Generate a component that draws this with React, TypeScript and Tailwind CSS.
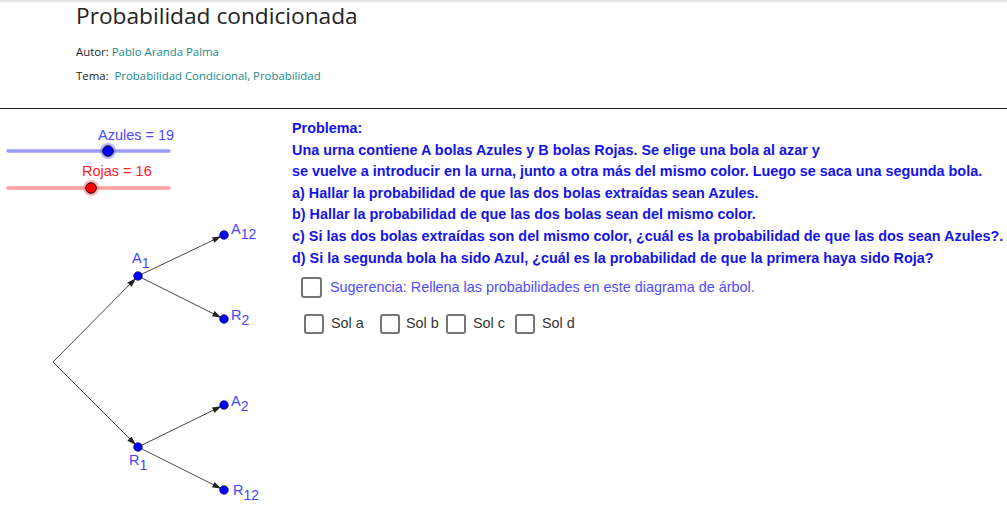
import React from "react";

const BLUE_LABEL = "#4646ff";

function Pt({ x, y }: { x: number; y: number }) {
  return <circle cx={x} cy={y} r={4.3} fill="#0000ff" stroke="#1a1a66" strokeWidth={0.8} />;
}

function Vec({ x1, y1, x2, y2 }: { x1: number; y1: number; x2: number; y2: number }) {
  const dx = x2 - x1;
  const dy = y2 - y1;
  const len = Math.sqrt(dx * dx + dy * dy);
  const ux = dx / len;
  const uy = dy / len;
  const tipX = x2 - ux * 3;
  const tipY = y2 - uy * 3;
  const bx = tipX - ux * 9;
  const by = tipY - uy * 9;
  const px = -uy * 3;
  const py = ux * 3;
  return (
    <g>
      <line x1={x1} y1={y1} x2={tipX} y2={tipY} stroke="#444" strokeWidth={1} />
      <polygon points={`${tipX},${tipY} ${bx + px},${by + py} ${bx - px},${by - py}`} fill="#222" />
    </g>
  );
}

function Label({ x, y, main, sub }: { x: number; y: number; main: string; sub: string }) {
  return (
    <text x={x} y={y} fill={BLUE_LABEL} fontFamily="'Liberation Sans', Arial, sans-serif" fontSize={14.5}>
      {main}
      <tspan fontSize={14} dy={5}>{sub}</tspan>
    </text>
  );
}

function Applet() {
  const o = 109;
  const root = { x: 53, y: 362 - o };
  const a1 = { x: 138, y: 276 - o };
  const r1 = { x: 138, y: 447 - o };
  const a12 = { x: 224, y: 235 - o };
  const r2 = { x: 224, y: 319 - o };
  const a2 = { x: 224, y: 405 - o };
  const r12 = { x: 224, y: 490 - o };
  return (
    <svg width={292} height={396} className="shrink-0 block">
      <text x={98} y={140 - o} fill="#4a4aff" fontFamily="'Liberation Sans', Arial, sans-serif" fontSize={14.5}>
        Azules = 19
      </text>
      <line x1={8} y1={151 - o} x2={169} y2={151 - o} stroke="#9c9cff" strokeWidth={3.5} strokeLinecap="round" />
      <circle cx={108} cy={151 - o} r={8} fill="#7a7aff" opacity={0.55} />
      <circle cx={108} cy={151 - o} r={5.3} fill="#0000ff" stroke="#111" strokeWidth={1} />

      <text x={82} y={176 - o} fill="#ff2020" fontFamily="'Liberation Sans', Arial, sans-serif" fontSize={14.5}>
        Rojas = 16
      </text>
      <line x1={8} y1={188 - o} x2={169} y2={188 - o} stroke="#ff9e9e" strokeWidth={3.5} strokeLinecap="round" />
      <circle cx={91} cy={188 - o} r={8} fill="#ff7a7a" opacity={0.55} />
      <circle cx={91} cy={188 - o} r={5.3} fill="#ff0000" stroke="#111" strokeWidth={1} />

      <Vec x1={root.x} y1={root.y} x2={a1.x} y2={a1.y} />
      <Vec x1={root.x} y1={root.y} x2={r1.x} y2={r1.y} />
      <Vec x1={a1.x} y1={a1.y} x2={a12.x} y2={a12.y} />
      <Vec x1={a1.x} y1={a1.y} x2={r2.x} y2={r2.y} />
      <Vec x1={r1.x} y1={r1.y} x2={a2.x} y2={a2.y} />
      <Vec x1={r1.x} y1={r1.y} x2={r12.x} y2={r12.y} />
      <Pt {...a1} />
      <Pt {...r1} />
      <Pt {...a12} />
      <Pt {...r2} />
      <Pt {...a2} />
      <Pt {...r12} />
      <Label x={132} y={263 - o} main="A" sub="1" />
      <Label x={231} y={234 - o} main="A" sub="12" />
      <Label x={231} y={320 - o} main="R" sub="2" />
      <Label x={231} y={406 - o} main="A" sub="2" />
      <Label x={129} y={465 - o} main="R" sub="1" />
      <Label x={233} y={495 - o} main="R" sub="12" />
    </svg>
  );
}

function Box({ size = 20 }: { size?: number }) {
  return (
    <span
      className="inline-block shrink-0 rounded-[3px] border-2 border-[#757575] bg-white"
      style={{ width: size, height: size }}
    />
  );
}

export default function App() {
  return (
    <div className="w-[1007px] h-[505px] overflow-hidden bg-white relative">
      <div className="h-[2px] bg-[#e6e6e6]" />
      <header className="pl-[76px] h-[107px] border-b border-[#222]">
        <h1
          className="text-[22.7px] leading-[28px] text-[#222]"
          style={{ fontFamily: "'Open Sans', 'Noto Sans', sans-serif" }}
        >
          Probabilidad condicionada
        </h1>
        <div
          className="mt-[14px] text-[11.4px] leading-[16px] text-[#222]"
          style={{ fontFamily: "'Open Sans', 'Noto Sans', sans-serif" }}
        >
          <div>
            Autor: <span className="text-[#168a8a]">Pablo Aranda Palma</span>
          </div>
          <div className="mt-[8px]">
            Tema:&nbsp; <span className="text-[#168a8a]">Probabilidad Condicional, Probabilidad</span>
          </div>
        </div>
      </header>
      <div className="flex">
        <Applet />
        <div className="pt-[9px]" style={{ fontFamily: "'Liberation Sans', Arial, sans-serif" }}>
          <div className="text-[14.4px] leading-[21.6px] font-bold text-[#1414e8]">
            <div>Problema:</div>
            <div>Una urna contiene A bolas Azules y B bolas Rojas. Se elige una bola al azar y</div>
            <div>se vuelve a introducir en la urna, junto a otra más del mismo color. Luego se saca una segunda bola.</div>
            <div>a) Hallar la probabilidad de que las dos bolas extraídas sean Azules.</div>
            <div>b) Hallar la probabilidad de que las dos bolas sean del mismo color.</div>
            <div className="whitespace-nowrap">c) Si las dos bolas extraídas son del mismo color, ¿cuál es la probabilidad de que las dos sean Azules?.</div>
            <div>d) Si la segunda bola ha sido Azul, ¿cuál es la probabilidad de que la primera haya sido Roja?</div>
          </div>
          <div className="mt-[8px] ml-[9px] flex items-center gap-[8px]">
            <Box size={21} />
            <span className="text-[14.4px] text-[#4d4dff]">
              Sugerencia: Rellena las probabilidades en este diagrama de árbol.
            </span>
          </div>
          <div className="mt-[14px] ml-[12px] flex items-center text-[14.4px] text-[#333]">
            <Box />
            <span className="ml-[7px] w-[49px]">Sol a</span>
            <Box />
            <span className="ml-[6px] w-[40px]">Sol b</span>
            <Box />
            <span className="ml-[7px] w-[42px]">Sol c</span>
            <Box />
            <span className="ml-[7px]">Sol d</span>
          </div>
        </div>
      </div>
    </div>
  );
}
